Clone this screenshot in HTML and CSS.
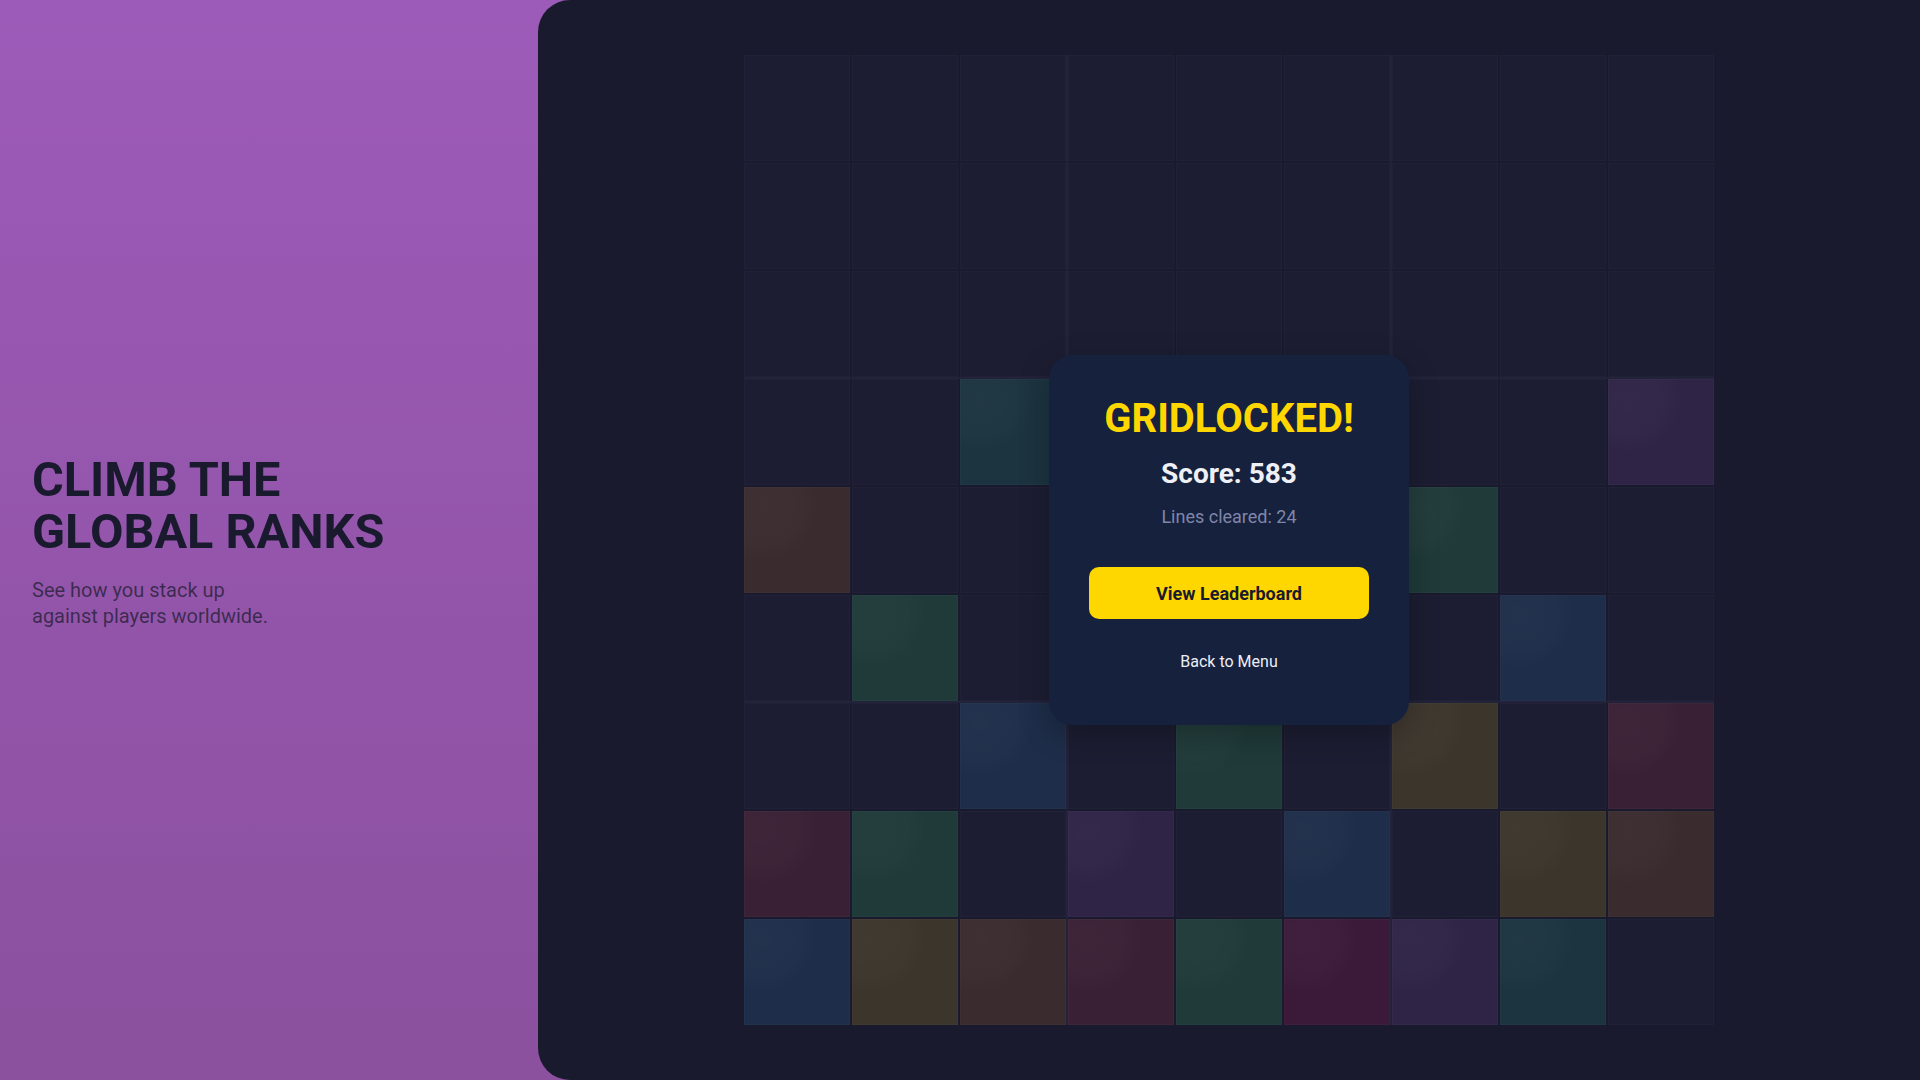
FILE: index.html
```html
<!DOCTYPE html>
<html lang="en">
<head>
<meta charset="utf-8">
<title>Gridlocked</title>
<link rel="stylesheet" href="styles.css">
</head>
<body>
<div class="app">
  <aside class="promo">
    <h1 class="promo-title">CLIMB THE<br>GLOBAL RANKS</h1>
    <p class="promo-text">See how you stack up<br>against players worldwide.</p>
  </aside>
  <main class="stage">
    <div class="board-wrap">
      <div class="board">
        <div class="box">
          <div class="cell"></div><div class="cell"></div><div class="cell"></div>
          <div class="cell"></div><div class="cell"></div><div class="cell"></div>
          <div class="cell"></div><div class="cell"></div><div class="cell"></div>
        </div>
        <div class="box">
          <div class="cell"></div><div class="cell"></div><div class="cell"></div>
          <div class="cell"></div><div class="cell"></div><div class="cell"></div>
          <div class="cell"></div><div class="cell"></div><div class="cell"></div>
        </div>
        <div class="box">
          <div class="cell"></div><div class="cell"></div><div class="cell"></div>
          <div class="cell"></div><div class="cell"></div><div class="cell"></div>
          <div class="cell"></div><div class="cell"></div><div class="cell"></div>
        </div>
        <div class="box">
          <div class="cell"></div><div class="cell"></div><div class="cell filled teal"></div>
          <div class="cell filled brown"></div><div class="cell"></div><div class="cell"></div>
          <div class="cell"></div><div class="cell filled green"></div><div class="cell"></div>
        </div>
        <div class="box">
          <div class="cell"></div><div class="cell"></div><div class="cell"></div>
          <div class="cell"></div><div class="cell"></div><div class="cell"></div>
          <div class="cell"></div><div class="cell"></div><div class="cell"></div>
        </div>
        <div class="box">
          <div class="cell"></div><div class="cell"></div><div class="cell filled purple"></div>
          <div class="cell filled green"></div><div class="cell"></div><div class="cell"></div>
          <div class="cell"></div><div class="cell filled blue"></div><div class="cell"></div>
        </div>
        <div class="box">
          <div class="cell"></div><div class="cell"></div><div class="cell filled blue"></div>
          <div class="cell filled maroon"></div><div class="cell filled green"></div><div class="cell"></div>
          <div class="cell filled blue"></div><div class="cell filled olive"></div><div class="cell filled brown"></div>
        </div>
        <div class="box">
          <div class="cell"></div><div class="cell filled green"></div><div class="cell"></div>
          <div class="cell filled purple"></div><div class="cell"></div><div class="cell filled blue"></div>
          <div class="cell filled maroon"></div><div class="cell filled green"></div><div class="cell filled magenta"></div>
        </div>
        <div class="box">
          <div class="cell filled olive"></div><div class="cell"></div><div class="cell filled maroon"></div>
          <div class="cell"></div><div class="cell filled olive"></div><div class="cell filled brown"></div>
          <div class="cell filled purple"></div><div class="cell filled teal"></div><div class="cell"></div>
        </div>
      </div>
      <div class="overlay">
        <div class="modal">
          <h2 class="modal-title">GRIDLOCKED!</h2>
          <p class="modal-score">Score: 583</p>
          <p class="modal-lines">Lines cleared: 24</p>
          <button class="btn-primary" type="button">View Leaderboard</button>
          <button class="btn-link" type="button">Back to Menu</button>
        </div>
      </div>
    </div>
  </main>
</div>
</body>
</html>
```

FILE: styles.css
```css
* {
  box-sizing: border-box;
}

html, body {
  margin: 0;
  padding: 0;
  height: 100%;
}

body {
  font-family: Roboto, "Liberation Sans", Arial, sans-serif;
  background: linear-gradient(180deg, #9d5bb9 0%, #8b509e 100%);
  overflow: hidden;
}

.app {
  display: flex;
  width: 1920px;
  height: 1080px;
}

.promo {
  width: 538px;
  flex: 0 0 538px;
  display: flex;
  flex-direction: column;
  justify-content: center;
  padding-left: 32px;
  padding-top: 2px;
}

.promo-title {
  margin: 0;
  font-size: 48.6px;
  line-height: 52px;
  font-weight: 700;
  color: #1a1a2e;
  letter-spacing: 0;
}

.promo-text {
  margin: 19px 0 0;
  font-size: 20px;
  line-height: 26px;
  color: rgba(26, 26, 46, 0.72);
}

.stage {
  flex: 1;
  background: #1a1a2e;
  border-radius: 32px 0 0 32px;
  display: flex;
  align-items: center;
  justify-content: center;
}

.board-wrap {
  position: relative;
  width: 970px;
  height: 970px;
}

.board {
  width: 100%;
  height: 100%;
  display: grid;
  grid-template-columns: repeat(3, 1fr);
  grid-template-rows: repeat(3, 1fr);
  gap: 2px;
  background: #22233a;
}

.box {
  display: grid;
  grid-template-columns: repeat(3, 1fr);
  grid-template-rows: repeat(3, 1fr);
  gap: 2px;
  background: #1a1a2e;
}

.cell {
  background: #1c1d32;
  box-shadow: inset 0 0 0 1px #202137;
}

.cell.filled {
  background-image: radial-gradient(circle at 18% 18%, rgba(255, 255, 255, 0.025) 0%, rgba(255, 255, 255, 0.015) 30%, rgba(255, 255, 255, 0) 45%);
  box-shadow: inset 0 0 0 1px rgba(255, 255, 255, 0.025);
}

.teal { background-color: #1c3440; }
.brown { background-color: #3a2b2f; }
.green { background-color: #1f3a39; }
.blue { background-color: #1e2d49; }
.olive { background-color: #3c352c; }
.maroon { background-color: #3a2034; }
.purple { background-color: #2f2446; }
.magenta { background-color: #3b1a39; }

.overlay {
  position: absolute;
  inset: 0;
  display: flex;
  align-items: center;
  justify-content: center;
}

.modal {
  width: 360px;
  background: #16213e;
  border-radius: 24px;
  padding: 40px 40px 42px;
  display: flex;
  flex-direction: column;
  align-items: center;
  text-align: center;
  box-shadow: 0 10px 30px rgba(0, 0, 0, 0.25);
}

.modal-title {
  margin: 0;
  font-size: 40px;
  line-height: 1.2;
  font-weight: 700;
  color: #ffd700;
}

.modal-score {
  margin: 14px 0 0;
  font-size: 28px;
  line-height: 1.2;
  font-weight: 700;
  color: #eef0f6;
}

.modal-lines {
  margin: 16px 0 0;
  font-size: 18px;
  line-height: 1.2;
  color: #7f86a8;
}

.btn-primary {
  margin-top: 39px;
  width: 100%;
  height: 52px;
  border: 0;
  border-radius: 10px;
  background: #ffd700;
  color: #1a1a2e;
  font-family: inherit;
  font-size: 18px;
  font-weight: 700;
  cursor: pointer;
}

.btn-link {
  margin-top: 21px;
  padding: 12px 16px;
  border: 0;
  background: transparent;
  color: #eceef5;
  font-family: inherit;
  font-size: 16px;
  line-height: 1.2;
  cursor: pointer;
}
```
